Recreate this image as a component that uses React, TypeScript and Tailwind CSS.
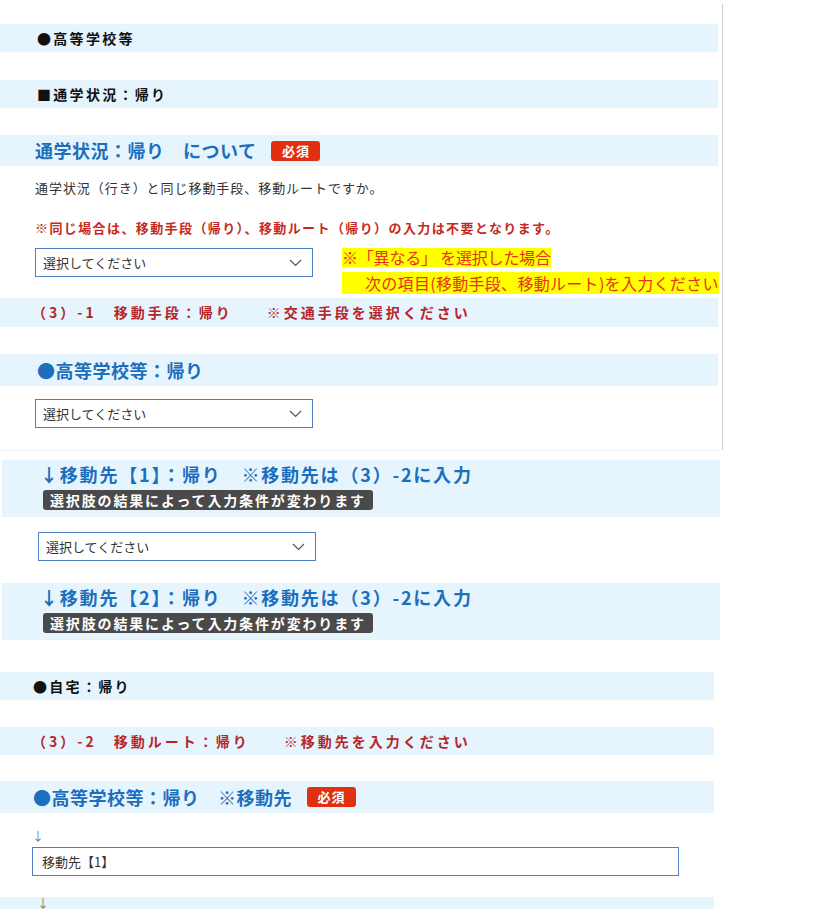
import React from "react";

const FONT = { fontFamily: '"Noto Sans CJK JP", "Noto Sans", sans-serif' };

function Chevron() {
  return (
    <svg width="13" height="8" viewBox="0 0 13 8" className="shrink-0">
      <polyline points="1,1 6.5,6.5 12,1" fill="none" stroke="#555" strokeWidth="1.2" />
    </svg>
  );
}

function Select({ ml }: { ml: string }) {
  return (
    <div
      className={`${ml} w-[278px] h-[29px] border border-[#4d7fc2] bg-white flex items-center justify-between pl-[7px] pr-[10px] text-[13px] text-[#333] shrink-0`}
    >
      <span>選択してください</span>
      <Chevron />
    </div>
  );
}

function Required({ cls }: { cls: string }) {
  return (
    <span
      className={`${cls} inline-flex items-center justify-center w-[49px] h-[20px] rounded-[3px] bg-[#e0300f] text-white text-[13px] font-bold tracking-[1px]`}
      style={{ fontFamily: '"Noto Sans CJK JP", serif' }}
    >
      必須
    </span>
  );
}

function BlackBar({ text, w, pl, mt }: { text: string; w: string; pl: string; mt: string }) {
  return (
    <div className={`${mt} ${w} h-[28px] bg-[#e6f4fd] flex items-center ${pl} text-[14px] font-bold tracking-[2.3px] text-[#111]`}>
      {text}
    </div>
  );
}

function RedBar({ text, w, mt }: { text: string; w: string; mt: string }) {
  return (
    <div className={`${mt} ${w} h-[29px] bg-[#e6f4fd] flex items-center pl-[32px] text-[14px] font-bold tracking-[3px] text-[#b5262b]`}>
      {text}
    </div>
  );
}

function DestBar({ n, mt }: { n: string; mt: string }) {
  return (
    <div className={`${mt} ml-[2px] w-[718px] h-[57px] bg-[#e6f4fd] pl-[38px] pt-[3px]`}>
      <div className="text-[18px] leading-[22px] font-bold text-[#1b6fbd] tracking-[1.8px]">
        ↓移動先【{n}】：帰り　※移動先は（3）-2に入力
      </div>
      <div className="mt-[5px] ml-[3px] inline-flex items-center h-[20px] px-[7px] rounded-[3px] bg-[#4a4a4a] text-white text-[14px] font-bold tracking-[1.85px]">
        選択肢の結果によって入力条件が変わります
      </div>
    </div>
  );
}

export default function App() {
  return (
    <div className="w-[819px] min-h-[909px] bg-white overflow-hidden" style={FONT}>
      {/* Section 1 */}
      <div className="mt-[4px] w-[723px] h-[446px] border-r border-[#cfcfcf] pt-[20px]">
        <BlackBar text="●高等学校等" w="w-[718px]" pl="pl-[37px]" mt="mt-0" />
        <BlackBar text="■通学状況：帰り" w="w-[718px]" pl="pl-[37px]" mt="mt-[28px]" />
        <div className="mt-[27px] w-[718px] h-[31px] bg-[#e6f4fd] flex items-center pl-[35px]">
          <span className="text-[18px] font-bold text-[#1b6fbd] tracking-[0.5px]">通学状況：帰り　について</span>
          <Required cls="ml-[15px]" />
        </div>
        <div className="mt-[14px] pl-[35px] text-[13px] leading-[16px] tracking-[0.95px] text-[#333]">
          通学状況（行き）と同じ移動手段、移動ルートですか。
        </div>
        <div className="mt-[24px] pl-[35px] text-[13px] leading-[16px] tracking-[1.4px] font-bold text-[#c52a22]">
          ※同じ場合は、移動手段（帰り）、移動ルート（帰り）の入力は不要となります。
        </div>
        <div className="mt-[12px] flex items-start h-[46px]">
          <Select ml="ml-[35px]" />
          <div className="ml-[29px] flex flex-col items-start text-[16px] text-[#e8331c]">
            <span className="bg-[#ffff00] h-[19px] leading-[19px] tracking-[-0.2px]">※「異なる」 を選択した場合</span>
            <span className="mt-[5px] bg-[#ffff00] h-[22px] leading-[22px] pl-[23px] tracking-[0.3px]">
              次の項目(移動手段、移動ルート)を入力ください
            </span>
          </div>
        </div>
        <RedBar text="（3）-1　移動手段：帰り　　※交通手段を選択ください" w="w-[718px]" mt="mt-[4px]" />
        <div className="mt-[27px] w-[718px] h-[32px] bg-[#e6f4fd] flex items-center pl-[37px]">
          <span className="text-[18px] font-bold text-[#1b6fbd] tracking-[0.5px]">●高等学校等：帰り</span>
        </div>
        <div className="mt-[13px]">
          <Select ml="ml-[35px]" />
        </div>
      </div>
      <div className="w-[720px] h-[1px] bg-[#e9f1f6]" />

      {/* Section 2 */}
      <DestBar n="1" mt="mt-[9px]" />
      <div className="mt-[15px]">
        <Select ml="ml-[38px]" />
      </div>
      <DestBar n="2" mt="mt-[22px]" />

      {/* Section 3 */}
      <BlackBar text="●自宅：帰り" w="w-[714px]" pl="pl-[33px]" mt="mt-[32px]" />
      <div className="mt-[27px] w-[714px] h-[28px] bg-[#e6f4fd] flex items-center pl-[32px] text-[14px] font-bold tracking-[3px] text-[#b5262b]">
        （3）-2　移動ルート：帰り　　※移動先を入力ください
      </div>
      <div className="mt-[26px] w-[714px] h-[32px] bg-[#e6f4fd] flex items-center pl-[33px]">
        <span className="text-[18px] font-bold text-[#1b6fbd] tracking-[0.5px]">●高等学校等：帰り　※移動先</span>
        <Required cls="ml-[15px]" />
      </div>
      <div className="mt-[15px] pl-[32px] text-[12px] leading-[16px] text-[#777]">↓</div>
      <div className="mt-[3px] ml-[32px] w-[647px] h-[29px] border border-[#4d7fc2] flex items-center pl-[9px] text-[13px] text-[#333]">
        移動先【1】
      </div>
      <div className="mt-[21px] w-[714px] h-[12px] bg-[#e6f4fd] pl-[37px] overflow-hidden">
        <div className="text-[12px] leading-[12px] text-[#777]">↓</div>
      </div>
    </div>
  );
}
